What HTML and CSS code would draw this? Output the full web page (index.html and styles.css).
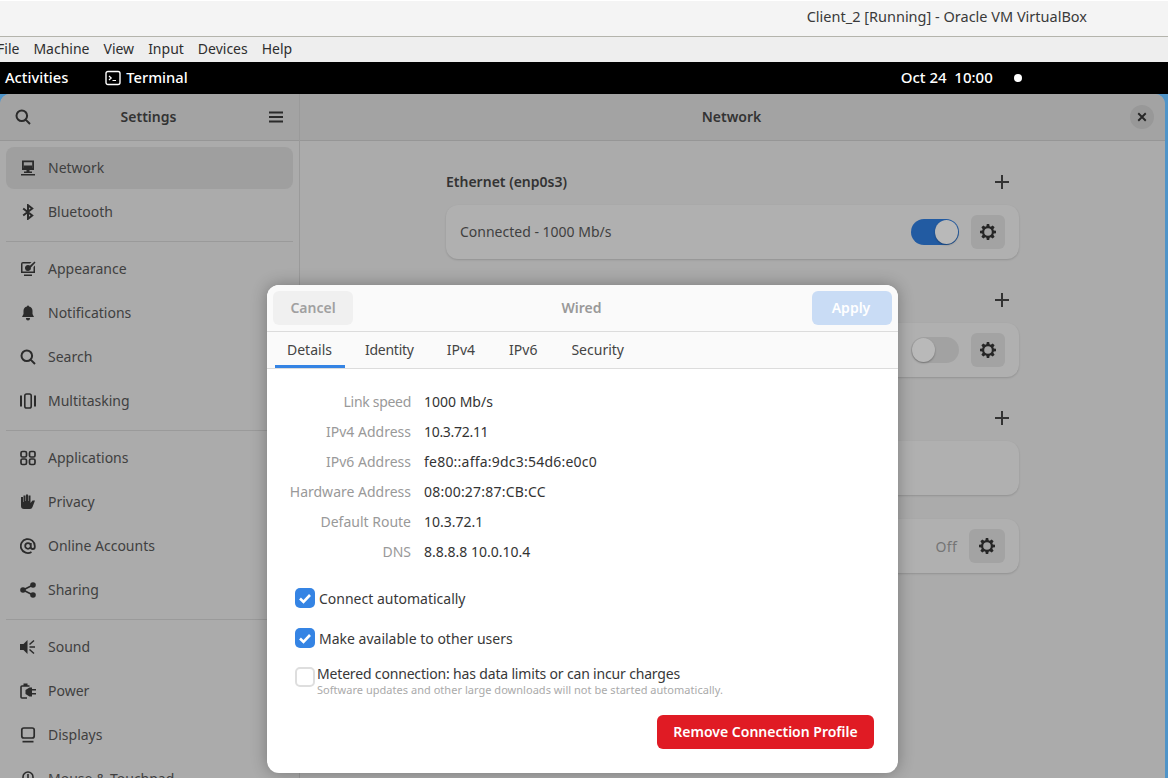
FILE: index.html
```html
<!DOCTYPE html>
<html lang="en">

<head>
    <meta charset="UTF-8">
    <meta name="viewport" content="width=device-width, initial-scale=1.0">
    <title>Client_2 [Running] - Oracle VM VirtualBox</title>
    <link rel="stylesheet" href="styles.css">
</head>

<body>
    <svg class="defs" width="0" height="0">
        <symbol id="gear" viewBox="0 0 16 16">
            <path fill="currentColor" fill-rule="evenodd" d="M6.800 0h2.400l.4 2.200 1.200.5L12.700 1.400l1.900 1.900-1.300 1.900.5 1.200 2.200.4v2.400l-2.200.4-.5 1.200 1.300 1.900-1.900 1.900-1.900-1.300-1.200.5-.4 2.200H6.800l-.4-2.200-1.200-.5-1.900 1.300-1.900-1.900 1.300-1.900-.5-1.200L0 9.200V6.800l2.200-.4.5-1.200-1.300-1.900 1.900-1.900 1.900 1.300 1.200-.5zM8 4.200a3.800 3.800 0 1 0 0 7.600 3.800 3.800 0 0 0 0-7.600z"/>
        </symbol>
        <symbol id="plus" viewBox="0 0 16 16">
            <path fill="currentColor" d="M7 1h2v6h6v2H9v6H7V9H1V7h6z"/>
        </symbol>
        <symbol id="loupe" viewBox="0 0 16 16">
            <path fill="none" stroke="currentColor" stroke-width="2" d="M6.800 1.500a5.300 5.300 0 1 0 0 10.600 5.300 5.300 0 0 0 0-10.600zM10.600 10.600l4.400 4.400"/>
        </symbol>
        <symbol id="tick" viewBox="0 0 20 20">
            <path fill="none" stroke="#fff" stroke-width="2.600" d="M5 10.500l3.500 3.500 6.500-7"/>
        </symbol>
    </svg>

    <div class="host-title">Client_2 [Running] - Oracle VM VirtualBox</div>

    <nav class="host-menu">
        <span class="host-menu-first">File</span>
        <span>Machine</span>
        <span>View</span>
        <span>Input</span>
        <span>Devices</span>
        <span>Help</span>
    </nav>

    <div class="top-bar">
        <span class="activities">Activities</span>
        <span class="app-name">
            <svg class="icon" viewBox="0 0 16 16">
                <rect x="1" y="1.500" width="14" height="13" rx="2" fill="none" stroke="currentColor" stroke-width="1.400"/>
                <path fill="none" stroke="currentColor" stroke-width="1.200" d="M4 6l2.200 2L4 10M7.500 10.500H11"/>
            </svg>
            Terminal
        </span>
        <span class="clock">Oct 24&nbsp; 10:00</span>
        <span class="status-dot"></span>
    </div>

    <div class="desktop">
        <div class="window">
            <aside class="sidebar">
                <header class="side-head">
                    <svg class="icon"><use href="#loupe"/></svg>
                    <span class="head-title">Settings</span>
                    <svg class="icon" viewBox="0 0 16 16">
                        <path fill="currentColor" d="M1 2.500h14v2H1zM1 7h14v2H1zM1 11.500h14v2H1z"/>
                    </svg>
                </header>

                <ul class="side-list">
                    <li class="side-row selected">
                        <svg class="icon" viewBox="0 0 16 16">
                            <path fill="currentColor" fill-rule="evenodd" d="M2 .5h12V10H9.500v1.500H12V13H4v-1.500h2.500V10H2zM3.800 2.300V8h8.400V2.300zM1 14h14v1.600H1z"/>
                            <path fill="currentColor" d="M3.800 5.500h8.400V8H3.800z"/>
                        </svg>
                        Network
                    </li>
                    <li class="side-row">
                        <svg class="icon" viewBox="0 0 16 16">
                            <path fill="none" stroke="currentColor" stroke-width="2" d="M3.200 4.500l9 7L8 14.800V1.200l4.200 3.300-9 7"/>
                        </svg>
                        Bluetooth
                    </li>
                    <li class="side-sep"></li>
                    <li class="side-row">
                        <svg class="icon" viewBox="0 0 16 16">
                            <path fill="currentColor" fill-rule="evenodd" d="M3 1h8.500L10 2.500H2.500v8h11V6L15 4.500V12H1V3a2 2 0 0 1 2-2zM4 13.500h8V15H4z"/>
                            <path fill="currentColor" d="M8 4a3 3 0 1 1-3 3.500A3 3 0 0 1 8 4zM14.500.5l1 1L10 7.500 8.500 6z"/>
                        </svg>
                        Appearance
                    </li>
                    <li class="side-row">
                        <svg class="icon" viewBox="0 0 16 16">
                            <path fill="currentColor" d="M8 .5a1 1 0 0 1 1 1 4.500 4.500 0 0 1 3.500 4.300V9l1.500 3H2l1.500-3V5.800A4.500 4.500 0 0 1 7 1.500a1 1 0 0 1 1-1zM6 13h4v.5a2 2 0 0 1-4 0z"/>
                        </svg>
                        Notifications
                    </li>
                    <li class="side-row">
                        <svg class="icon"><use href="#loupe"/></svg>
                        Search
                    </li>
                    <li class="side-row">
                        <svg class="icon" viewBox="0 0 16 16">
                            <rect x="4.800" y="1" width="6.400" height="14" rx="1.800" fill="none" stroke="currentColor" stroke-width="1.600"/>
                            <path fill="currentColor" d="M0 2.500h2v11H0zM14 2.500h2v11h-2z"/>
                        </svg>
                        Multitasking
                    </li>
                    <li class="side-sep"></li>
                    <li class="side-row">
                        <svg class="icon" viewBox="0 0 16 16">
                            <g fill="none" stroke="currentColor" stroke-width="1.700">
                                <rect x="1" y="1.500" width="5.500" height="5.500" rx="1.500"/>
                                <rect x="9.500" y="1.500" width="5.500" height="5.500" rx="1.500"/>
                                <rect x="1" y="9" width="5.500" height="5.500" rx="1.500"/>
                                <rect x="9.500" y="9" width="5.500" height="5.500" rx="1.500"/>
                            </g>
                        </svg>
                        Applications
                    </li>
                    <li class="side-row">
                        <svg class="icon" viewBox="0 0 16 16">
                            <path fill="currentColor" d="M1 3h2v5h.5V1.500h2V7H6V.5h2V7h.5V1.500h2V9l2-2.500h2.500L12.500 13a3 3 0 0 1-2.500 2H4a3 3 0 0 1-3-3z"/>
                        </svg>
                        Privacy
                    </li>
                    <li class="side-row">
                        <svg class="icon" viewBox="0 0 16 16">
                            <path fill="none" stroke="currentColor" stroke-width="1.800" d="M11.500 14a7 7 0 1 1 3.300-6v1a2 2 0 0 1-4 0V5M10.800 8a2.800 2.800 0 1 1-5.600 0 2.800 2.800 0 0 1 5.600 0z"/>
                        </svg>
                        Online Accounts
                    </li>
                    <li class="side-row">
                        <svg class="icon" viewBox="0 0 16 16">
                            <circle cx="3" cy="8" r="2.800" fill="currentColor"/>
                            <circle cx="13" cy="3" r="2.800" fill="currentColor"/>
                            <circle cx="13" cy="13" r="2.800" fill="currentColor"/>
                            <path fill="none" stroke="currentColor" stroke-width="1.600" d="M13 3L3 8l10 5"/>
                        </svg>
                        Sharing
                    </li>
                    <li class="side-sep"></li>
                    <li class="side-row">
                        <svg class="icon" viewBox="0 0 16 16">
                            <path fill="currentColor" d="M7.500 1v14L3.500 11H0V5h3.500z"/>
                            <path fill="none" stroke="currentColor" stroke-width="1.500" d="M14 1.500L9.500 5.500M15 8H9.500M14 14.500l-4.500-4"/>
                        </svg>
                        Sound
                    </li>
                    <li class="side-row">
                        <svg class="icon" viewBox="0 0 16 16">
                            <path fill="none" stroke="currentColor" stroke-width="1.600" d="M9.500 3H2a1 1 0 0 0-1 1v10a1 1 0 0 0 1 1h5"/>
                            <path fill="currentColor" d="M3.500 .5h4V3h-4zM5.500 7l4-2.500H12v9H9.500l-4-2.500zM12 6h4v1.500h-4zM12 10h4v1.500h-4z"/>
                        </svg>
                        Power
                    </li>
                    <li class="side-row">
                        <svg class="icon" viewBox="0 0 16 16">
                            <rect x="1.800" y="1" width="12.400" height="10" rx="2" fill="none" stroke="currentColor" stroke-width="1.700"/>
                            <path fill="currentColor" d="M2.500 13.800h11v1.700h-11z"/>
                        </svg>
                        Displays
                    </li>
                    <li class="side-row">
                        <svg class="icon" viewBox="0 0 16 16">
                            <rect x="3" y="1" width="10" height="14" rx="5" fill="none" stroke="currentColor" stroke-width="1.600"/>
                            <path fill="currentColor" d="M7.200 3h1.600v4H7.200z"/>
                        </svg>
                        Mouse &amp; Touchpad
                    </li>
                </ul>
            </aside>

            <main class="panel">
                <header class="panel-head">
                    <span class="head-title">Network</span>
                    <button class="close-btn">
                        <svg viewBox="0 0 16 16" width="10" height="10">
                            <path fill="none" stroke="currentColor" stroke-width="3" d="M2 2l12 12M14 2L2 14"/>
                        </svg>
                    </button>
                </header>

                <div class="panel-body">
                    <div class="section-head">
                        <span>Ethernet (enp0s3)</span>
                        <svg class="icon"><use href="#plus"/></svg>
                    </div>
                    <div class="card">
                        <span class="card-label">Connected - 1000 Mb/s</span>
                        <span class="switch on"><span class="knob"></span></span>
                        <span class="gear-btn"><svg class="icon"><use href="#gear"/></svg></span>
                    </div>

                    <div class="section-head section-next">
                        <span></span>
                        <svg class="icon"><use href="#plus"/></svg>
                    </div>
                    <div class="card">
                        <span class="card-label"></span>
                        <span class="switch"><span class="knob"></span></span>
                        <span class="gear-btn"><svg class="icon"><use href="#gear"/></svg></span>
                    </div>

                    <div class="section-head section-next">
                        <span></span>
                        <svg class="icon"><use href="#plus"/></svg>
                    </div>
                    <div class="card"></div>

                    <div class="card card-next">
                        <span class="card-label"></span>
                        <span class="off-label">Off</span>
                        <span class="gear-btn gear-wide"><svg class="icon"><use href="#gear"/></svg></span>
                    </div>
                </div>
            </main>
        </div>

        <section class="dialog">
            <header class="dialog-head">
                <button class="btn btn-cancel">Cancel</button>
                <span class="dialog-title">Wired</span>
                <button class="btn btn-apply">Apply</button>
            </header>

            <div class="tabs">
                <span class="tab active">Details</span>
                <span class="tab tab-tight">Identity</span>
                <span class="tab">IPv4</span>
                <span class="tab">IPv6</span>
                <span class="tab">Security</span>
            </div>

            <div class="dialog-body">
                <dl class="details">
                    <dt class="tight">Link speed</dt>
                    <dd>1000 Mb/s</dd>
                    <dt>IPv4 Address</dt>
                    <dd class="tight">10.3.72.11</dd>
                    <dt>IPv6 Address</dt>
                    <dd class="spaced">fe80::affa:9dc3:54d6:e0c0</dd>
                    <dt>Hardware Address</dt>
                    <dd class="spaced">08:00:27:87:CB:CC</dd>
                    <dt>Default Route</dt>
                    <dd>10.3.72.1</dd>
                    <dt>DNS</dt>
                    <dd>8.8.8.8 10.0.10.4</dd>
                </dl>

                <div class="check-row">
                    <span class="check checked"><svg width="20" height="20"><use href="#tick"/></svg></span>
                    Connect automatically
                </div>
                <div class="check-row">
                    <span class="check checked"><svg width="20" height="20"><use href="#tick"/></svg></span>
                    Make available to other users
                </div>
                <div class="check-row metered">
                    <span class="check"></span>
                    <div>
                        <div class="metered-title">Metered connection: has data limits or can incur charges</div>
                        <div class="metered-note">Software updates and other large downloads will not be started automatically.</div>
                    </div>
                </div>

                <div class="dialog-foot">
                    <button class="btn btn-remove">Remove Connection Profile</button>
                </div>
            </div>
        </section>
    </div>
</body>

</html>
```

FILE: styles.css
```css
/* page */
html, body {
    height: 100%;
}

body {
    margin: 0;
    display: flex;
    flex-direction: column;
    overflow: hidden;
    font-family: "Noto Sans", "Open Sans", sans-serif;
    font-size: 14px;
    color: #333;
    background: #eee;
}

.defs {
    display: none;
}

.icon {
    width: 16px;
    height: 16px;
    flex: none;
}

/* VirtualBox frame */
.host-title {
    height: 37px;
    flex: none;
    box-sizing: border-box;
    padding-right: 81px;
    border-top: 1px solid #fff;
    border-bottom: 1px solid #b4b4ac;
    background: #f4f4f4;
    color: #3a3a3a;
    font-size: 14.5px;
    line-height: 31px;
    text-align: right;
}

.host-menu {
    height: 25px;
    flex: none;
    box-sizing: border-box;
    display: flex;
    gap: 14px;
    align-items: center;
    padding-bottom: 2px;
    background: #eee;
    color: #2e2e2e;
}

.host-menu-first {
    margin-left: -3px;
}

/* gnome top bar */
.top-bar {
    height: 32px;
    flex: none;
    box-sizing: border-box;
    display: flex;
    align-items: center;
    padding-bottom: 2px;
    background: #000;
    color: #fff;
    font-size: 14.7px;
    font-weight: 500;
}

.activities {
    margin-left: 5px;
}

.app-name {
    display: flex;
    align-items: center;
    gap: 5px;
    margin-left: 37px;
}

.app-name .icon {
    margin-top: 2px;
}

.clock {
    margin-left: 713px;
    font-size: 15px;
}

.status-dot {
    width: 8px;
    height: 8px;
    margin: 2px 0 0 21px;
    border-radius: 50%;
    background: #fff;
}

/* desktop and settings window */
.desktop {
    flex: 1;
    min-height: 0;
    position: relative;
    padding-right: 3px;
    background: #4f94c8;
}

.window {
    height: 100%;
    display: flex;
    overflow: hidden;
    border-radius: 10px 10px 0 0;
    background: #ababab;
}

.sidebar {
    width: 299px;
    flex: none;
    border-right: 1px solid #9a9a9a;
    overflow: hidden;
}

.side-head {
    height: 47px;
    box-sizing: border-box;
    display: flex;
    align-items: center;
    justify-content: space-between;
    padding: 0 15px;
    border-bottom: 1px solid #969696;
    background: #a3a3a3;
    color: #2b2b2b;
}

.head-title {
    padding: 0 2px 2px 0;
    font-weight: 600;
    color: #333;
}

.side-list {
    list-style: none;
    margin: 0;
    padding: 5px 6px 0;
    color: #404040;
}

.side-row {
    height: 44px;
    box-sizing: border-box;
    display: flex;
    align-items: center;
    gap: 12px;
    padding: 0 0 2px 14px;
    border-radius: 8px;
}

.side-row .icon {
    margin-top: 2px;
    color: #2b2b2b;
}

.selected {
    height: 42px;
    margin: 1px 0;
    background: #9f9f9f;
}

.side-sep {
    height: 1px;
    margin: 7px 0 5px;
    background: #9a9a9a;
}

/* network panel */
.panel {
    flex: 1;
    min-width: 0;
}

.panel-head {
    height: 47px;
    box-sizing: border-box;
    position: relative;
    display: flex;
    align-items: center;
    justify-content: center;
    border-bottom: 1px solid #969696;
    background: #a3a3a3;
}

.close-btn {
    position: absolute;
    right: 11px;
    top: 11px;
    width: 24px;
    height: 24px;
    padding: 0;
    border: none;
    border-radius: 50%;
    display: flex;
    align-items: center;
    justify-content: center;
    background: #989898;
    color: #262626;
}

.panel-body {
    width: 573px;
    margin: 0 auto;
    padding-top: 25px;
}

.section-head {
    height: 32px;
    display: flex;
    align-items: center;
    justify-content: space-between;
    padding-right: 9px;
    margin-bottom: 7px;
    font-weight: 600;
    color: #333;
}

.section-head span {
    padding-bottom: 2px;
}

.section-next {
    margin-top: 25px;
}

.card {
    height: 54px;
    box-sizing: border-box;
    display: flex;
    align-items: center;
    gap: 12px;
    padding: 0 14px;
    border-radius: 12px;
    background: #b0b0b0;
    box-shadow: 0 1px 2px rgba(0, 0, 0, 0.15);
}

.card-next {
    margin-top: 24px;
}

.card-label {
    flex: 1;
    padding-bottom: 2px;
    color: #404040;
}

.off-label {
    color: #757575;
    letter-spacing: 0.3px;
}

.switch {
    width: 48px;
    height: 26px;
    position: relative;
    border-radius: 13px;
    background: #a2a2a2;
}

.switch.on {
    background: #225ba2;
}

.knob {
    position: absolute;
    left: 1px;
    top: 1px;
    width: 23px;
    height: 24px;
    border-radius: 50%;
    background: #b9b9b9;
    box-shadow: 0 1px 2px rgba(0, 0, 0, 0.3);
}

.on .knob {
    left: 24px;
}

.gear-btn {
    width: 34px;
    height: 34px;
    display: flex;
    align-items: center;
    justify-content: center;
    border-radius: 6px;
    background: #a3a3a3;
    color: #262626;
}

.gear-wide {
    width: 36px;
}

/* wired dialog */
.dialog {
    position: absolute;
    left: 267px;
    top: 191px;
    width: 631px;
    height: 488px;
    overflow: hidden;
    border-radius: 12px;
    background: #fff;
    box-shadow: 0 0 16px rgba(0, 0, 0, 0.3);
}

.dialog-head {
    height: 47px;
    box-sizing: border-box;
    display: flex;
    align-items: center;
    justify-content: space-between;
    padding: 0 6px;
    border-bottom: 1px solid #dcdcdc;
    background: #fafafa;
}

.dialog-title {
    padding: 0 2px 2px 0;
    font-weight: 600;
    color: #999;
}

.btn {
    height: 34px;
    padding: 0 0 2px;
    border: none;
    border-radius: 6px;
    font-family: inherit;
    font-size: 14px;
    font-weight: 600;
}

.btn-cancel {
    width: 80px;
    background: #f0f0f0;
    color: #a0a0a0;
}

.btn-apply {
    width: 80px;
    padding-right: 2px;
    background: #c9dcf5;
    color: #fff;
}

.tabs {
    height: 37px;
    box-sizing: border-box;
    display: flex;
    gap: 9px;
    padding-left: 8px;
    border-bottom: 1px solid #dcdcdc;
    background: #fafafa;
}

.tab {
    padding: 0 12px;
    line-height: 35px;
    color: #444;
}

.tab:nth-child(n+4) {
    margin-left: 1px;
}

.tab-tight {
    letter-spacing: -0.25px;
}

.tab.active {
    height: 33px;
    margin-right: -1px;
    padding-right: 13px;
    border-bottom: 3px solid #3584e4;
}

.dialog-body {
    padding: 17px 24px 0 28px;
}

.details {
    display: grid;
    grid-template-columns: 116px 1fr;
    grid-auto-rows: 30px;
    column-gap: 13px;
    margin: 0 0 22px;
    align-items: center;
}

.details dt {
    margin-left: -30px;
    text-align: right;
    color: #999;
}

.details dd {
    margin: 0;
    color: #333;
}

.details .tight {
    letter-spacing: -0.3px;
}

.details .spaced {
    letter-spacing: 0.22px;
}

.check-row {
    height: 20px;
    display: flex;
    align-items: center;
    gap: 4px;
    margin-bottom: 20px;
    color: #383838;
}

.check {
    width: 20px;
    height: 20px;
    flex: none;
    border-radius: 5px;
    background: #3584e4;
}

.metered {
    height: 32px;
    align-items: flex-start;
    gap: 2px;
    margin-top: -3px;
    margin-bottom: 0;
}

.metered .check {
    box-sizing: border-box;
    margin-top: 2px;
    border: 2px solid #dedede;
    background: #fff;
}

.metered-title {
    padding-top: 1px;
    line-height: 16px;
    letter-spacing: -0.17px;
}

.metered-note {
    margin-top: 1px;
    font-size: 11px;
    line-height: 13px;
    letter-spacing: 0.03px;
    color: #aaa;
}

.dialog-foot {
    display: flex;
    justify-content: flex-end;
    margin-top: 18px;
}

.btn-remove {
    width: 217px;
    background: #e01b24;
    color: #fff;
}
```
